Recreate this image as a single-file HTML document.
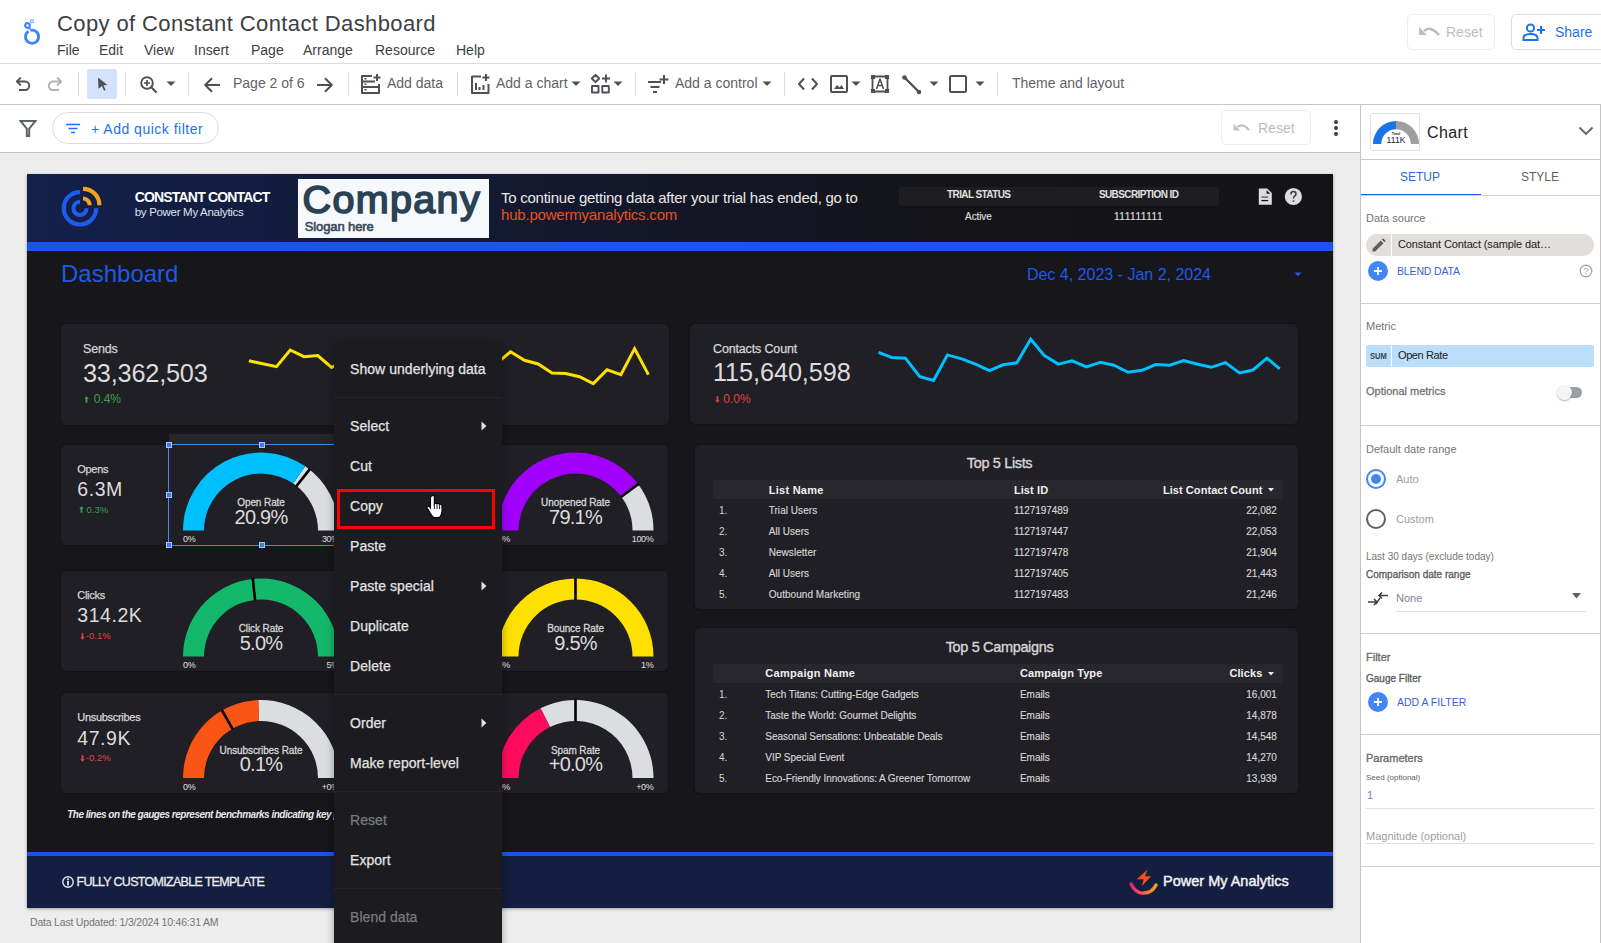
<!DOCTYPE html>
<html><head><meta charset="utf-8">
<style>
*{box-sizing:border-box;margin:0;padding:0}
html,body{width:1601px;height:943px;overflow:hidden;background:#fff;font-family:"Liberation Sans",sans-serif;position:relative}
.a{position:absolute;white-space:nowrap}
.ic{position:absolute}
/* header */
#hdr{position:absolute;left:0;top:0;width:1601px;height:64px;background:#fff;border-bottom:1px solid #dadce0}
.menu span{position:absolute;top:42px;font-size:14px;color:#3c4043;line-height:16px}
#tb{position:absolute;left:0;top:64px;width:1601px;height:41px;background:#fff;border-bottom:1px solid #c7c7c7}
.sep{position:absolute;top:8px;width:1px;height:24px;background:#dadce0}
.tbt{position:absolute;top:11px;font-size:14px;line-height:16px;color:#5f6368}
#fb{position:absolute;left:0;top:105px;width:1360px;height:48px;background:#fff;border-bottom:1px solid #c7c7c7}
#canvas{position:absolute;left:0;top:153px;width:1360px;height:790px;background:#ededed}
#panel{position:absolute;left:1360px;top:105px;width:241px;height:838px;background:#fff;border-left:1px solid #c4c4c4;border-right:1px solid #c4c4c4}
.pl{position:absolute;left:0;width:239px;height:1px;background:#d0d0d0}
.lbl{position:absolute;left:5px;font-size:11px;color:#757575;line-height:13px}
/* dashboard */
#dash{position:absolute;left:27px;top:174px;width:1306px;height:734px;background:#16161b;box-shadow:0 1px 3px rgba(0,0,0,.35);overflow:hidden}
.card{position:absolute;background:#1f1f25;border-radius:5px;box-shadow:0 0 2px rgba(0,0,0,.55)}
.w{color:#e6e6e6}
.mi{position:absolute;left:16px;height:40px;line-height:40px;font-size:14px;color:#e3e3e3;white-space:nowrap;letter-spacing:0.05px;-webkit-text-stroke:0.25px currentColor}
.dv{position:absolute;left:0;width:168px;height:1px;background:#26262b}
</style></head><body>

<!-- HEADER -->
<div id="hdr">
  <svg class="ic" style="left:15px;top:12px" width="35" height="38" viewBox="15 12 35 38">
    <path d="M30.36 30.42 A6.55 6.55 0 1 1 28.58 31.2" fill="none" stroke="#4285f4" stroke-width="2.8"/>
    <path d="M28.68 27.44 A2.35 2.35 0 1 1 29.85 25.4 L29.3 29.3" fill="none" stroke="#4285f4" stroke-width="2.2"/>
    <circle cx="32" cy="21.25" r="1.5" fill="none" stroke="#8ab4f8" stroke-width="1.3"/>
  </svg>
  <div class="a" style="left:57px;top:11px;font-size:22px;color:#3c4043;line-height:26px;letter-spacing:0.39px">Copy of Constant Contact Dashboard</div>
  <div class="menu">
    <span style="left:57px">File</span><span style="left:99px">Edit</span><span style="left:144px">View</span><span style="left:194px">Insert</span><span style="left:251px">Page</span><span style="left:303px">Arrange</span><span style="left:375px">Resource</span><span style="left:456px">Help</span>
  </div>
  <div class="a" style="left:1407px;top:14px;width:88px;height:36px;border:1px solid #ececec;border-radius:5px"></div>
  <svg class="ic" style="left:1419px;top:23px" width="22" height="18" viewBox="0 0 22 18"><path d="M5 8 Q11 2 20 12" fill="none" stroke="#bdbdbd" stroke-width="2.6"/><path d="M0 4 L0 12 L8 12 Z" fill="#bdbdbd"/></svg>
  <div class="a" style="left:1446px;top:24px;font-size:14px;line-height:16px;color:#bdbdbd">Reset</div>
  <div class="a" style="left:1511px;top:14px;width:110px;height:36px;border:1px solid #dadce0;border-radius:5px"></div>
  <svg class="ic" style="left:1522px;top:23px" width="24" height="18" viewBox="0 0 24 18"><circle cx="8.5" cy="5" r="3.6" fill="none" stroke="#1a73e8" stroke-width="2"/><path d="M1.5 17 V15 Q1.5 11 8.5 11 Q15.5 11 15.5 15 V17 Z" fill="none" stroke="#1a73e8" stroke-width="2"/><path d="M19 3 V11 M15 7 H23" stroke="#1a73e8" stroke-width="2"/></svg>
  <div class="a" style="left:1555px;top:24px;font-size:14px;line-height:16px;color:#1a73e8">Share</div>
</div>

<!-- TOOLBAR -->
<div id="tb">
  <!-- undo -->
  <svg class="ic" stroke-linejoin="round" style="left:14px;top:11px" width="18" height="18" viewBox="0 0 18 18"><path d="M3 6.5 H11 A4.2 4.2 0 0 1 11 15 H5" fill="none" stroke="#4d5054" stroke-width="1.9"/><path d="M6.8 2.6 L2.9 6.5 L6.8 10.4" fill="none" stroke="#4d5054" stroke-width="1.9"/></svg>
  <svg class="ic" stroke-linejoin="round" style="left:46px;top:11px" width="18" height="18" viewBox="0 0 18 18"><path d="M15 6.5 H7 A4.2 4.2 0 0 0 7 15 H13" fill="none" stroke="#b0b0b0" stroke-width="1.9"/><path d="M11.2 2.6 L15.1 6.5 L11.2 10.4" fill="none" stroke="#b0b0b0" stroke-width="1.9"/></svg>
  <div class="sep" style="left:78px"></div>
  <div class="a" style="left:87px;top:5px;width:30px;height:30px;background:#d3e3fd;border-radius:3px"></div>
  <svg class="ic" stroke-linejoin="round" style="left:96px;top:12px" width="14" height="16" viewBox="0 0 14 16"><path d="M2 1.5 L11.5 9 L7.4 9.3 L9.6 14 L8.1 14.7 L5.9 10.1 L2.5 12.7 Z" fill="#4d5054"/></svg>
  <div class="sep" style="left:125px"></div>
  <svg class="ic" stroke-linejoin="round" style="left:139px;top:11px" width="20" height="20" viewBox="0 0 20 20"><circle cx="8" cy="8" r="5.8" fill="none" stroke="#4d5054" stroke-width="1.9"/><path d="M12.3 12.3 L17.5 17.5" stroke="#4d5054" stroke-width="2.2"/><path d="M8 5 V11 M5 8 H11" stroke="#4d5054" stroke-width="1.7"/></svg>
  <svg class="ic" stroke-linejoin="round" style="left:166px;top:17px" width="10" height="6" viewBox="0 0 10 6"><path d="M0.5 0.5 H9.5 L5 5 Z" fill="#4d5054"/></svg>
  <div class="sep" style="left:188px"></div>
  <svg class="ic" stroke-linejoin="round" style="left:202px;top:11px" width="20" height="20" viewBox="0 0 20 20"><path d="M18 10 H3.5 M10 3.2 L3.2 10 L10 16.8" fill="none" stroke="#4d5054" stroke-width="2"/></svg>
  <div class="tbt" style="left:233px">Page 2 of 6</div>
  <svg class="ic" stroke-linejoin="round" style="left:315px;top:11px" width="20" height="20" viewBox="0 0 20 20"><path d="M2 10 H16.5 M10 3.2 L16.8 10 L10 16.8" fill="none" stroke="#4d5054" stroke-width="2"/></svg>
  <div class="sep" style="left:348px"></div>
  <svg class="ic" stroke-linejoin="round" style="left:359px;top:9px" width="24" height="22" viewBox="0 0 24 22"><path d="M13 3 H3 V20 H20 V11" fill="none" stroke="#4d5054" stroke-width="2"/><path d="M3 8.5 H16 M3 14 H20" stroke="#4d5054" stroke-width="2"/><path d="M5.5 5.7 h2 M5.5 11.2 h2 M5.5 16.8 h2" stroke="#4d5054" stroke-width="1.4"/><path d="M18 1 V8 M14.5 4.5 H21.5" stroke="#4d5054" stroke-width="2"/></svg>
  <div class="tbt" style="left:387px">Add data</div>
  <div class="sep" style="left:457px"></div>
  <svg class="ic" stroke-linejoin="round" style="left:469px;top:9px" width="24" height="22" viewBox="0 0 24 22"><path d="M12 3.5 H3 V20 H19.5 V11" fill="none" stroke="#4d5054" stroke-width="2"/><path d="M7 17 V10 M10.5 17 V14 M14.5 17 V12" stroke="#4d5054" stroke-width="2"/><path d="M17 1 V8 M13.5 4.5 H20.5" stroke="#4d5054" stroke-width="2"/></svg>
  <div class="tbt" style="left:496px">Add a chart</div>
  <svg class="ic" stroke-linejoin="round" style="left:571px;top:17px" width="10" height="6" viewBox="0 0 10 6"><path d="M0.5 0.5 H9.5 L5 5 Z" fill="#4d5054"/></svg>
  <svg class="ic" stroke-linejoin="round" style="left:590px;top:9px" width="22" height="22" viewBox="0 0 22 22"><path d="M5.5 1.8 L9.2 5.5 L5.5 9.2 L1.8 5.5 Z" fill="none" stroke="#4d5054" stroke-width="1.9"/><path d="M16 1.5 V9.5 M12 5.5 H20" stroke="#4d5054" stroke-width="1.9"/><rect x="2" y="13" width="6.5" height="6.5" fill="none" stroke="#4d5054" stroke-width="1.9"/><rect x="12.3" y="13" width="6.5" height="6.5" fill="none" stroke="#4d5054" stroke-width="1.9"/></svg>
  <svg class="ic" stroke-linejoin="round" style="left:613px;top:17px" width="10" height="6" viewBox="0 0 10 6"><path d="M0.5 0.5 H9.5 L5 5 Z" fill="#4d5054"/></svg>
  <div class="sep" style="left:635px"></div>
  <svg class="ic" stroke-linejoin="round" style="left:647px;top:9px" width="22" height="22" viewBox="0 0 22 22"><path d="M1 9 H14 M3.5 14 H12.5 M6 19 H10" stroke="#4d5054" stroke-width="2"/><path d="M17 2 V11 M12.5 6.5 H21.5" stroke="#4d5054" stroke-width="2"/></svg>
  <div class="tbt" style="left:675px">Add a control</div>
  <svg class="ic" stroke-linejoin="round" style="left:762px;top:17px" width="10" height="6" viewBox="0 0 10 6"><path d="M0.5 0.5 H9.5 L5 5 Z" fill="#4d5054"/></svg>
  <div class="sep" style="left:784px"></div>
  <svg class="ic" stroke-linejoin="round" style="left:797px;top:10px" width="22" height="20" viewBox="0 0 22 20"><path d="M7 4.5 L2 10 L7 15.5 M15 4.5 L20 10 L15 15.5" fill="none" stroke="#4d5054" stroke-width="2"/></svg>
  <svg class="ic" stroke-linejoin="round" style="left:829px;top:10px" width="20" height="20" viewBox="0 0 20 20"><rect x="2" y="2" width="16" height="16" rx="1" fill="none" stroke="#4d5054" stroke-width="2"/><path d="M5 15 L8 11 L10.5 13.5 L12.5 11 L15 15 Z" fill="#4d5054"/></svg>
  <svg class="ic" stroke-linejoin="round" style="left:851px;top:17px" width="10" height="6" viewBox="0 0 10 6"><path d="M0.5 0.5 H9.5 L5 5 Z" fill="#4d5054"/></svg>
  <svg class="ic" stroke-linejoin="round" style="left:870px;top:10px" width="20" height="20" viewBox="0 0 20 20"><rect x="2.5" y="2.5" width="15" height="15" fill="none" stroke="#4d5054" stroke-width="1.8"/><rect x="1" y="1" width="4" height="4" fill="#4d5054"/><rect x="15" y="1" width="4" height="4" fill="#4d5054"/><rect x="1" y="15" width="4" height="4" fill="#4d5054"/><rect x="15" y="15" width="4" height="4" fill="#4d5054"/><path d="M6.5 15 L10 5 L13.5 15 M7.8 11.5 H12.2" fill="none" stroke="#4d5054" stroke-width="1.5"/></svg>
  <svg class="ic" stroke-linejoin="round" style="left:901px;top:10px" width="22" height="22" viewBox="0 0 22 22"><path d="M3.5 3.5 L18 18" stroke="#4d5054" stroke-width="2.4"/><circle cx="3.5" cy="3.5" r="2.3" fill="#4d5054"/><circle cx="18" cy="18" r="2.3" fill="#4d5054"/></svg>
  <svg class="ic" stroke-linejoin="round" style="left:929px;top:17px" width="10" height="6" viewBox="0 0 10 6"><path d="M0.5 0.5 H9.5 L5 5 Z" fill="#4d5054"/></svg>
  <svg class="ic" stroke-linejoin="round" style="left:948px;top:10px" width="20" height="20" viewBox="0 0 20 20"><rect x="2" y="2" width="16" height="16" rx="1.5" fill="none" stroke="#4d5054" stroke-width="2"/></svg>
  <svg class="ic" stroke-linejoin="round" style="left:975px;top:17px" width="10" height="6" viewBox="0 0 10 6"><path d="M0.5 0.5 H9.5 L5 5 Z" fill="#4d5054"/></svg>
  <div class="sep" style="left:997px"></div>
  <div class="tbt" style="left:1012px">Theme and layout</div>
</div>

<!-- FILTER BAR -->
<div id="fb">
  <svg class="ic" style="left:19px;top:14px" width="18" height="18" viewBox="0 0 18 18"><path d="M1.5 2 H16.5 L10.2 9.5 V17 H7.8 V9.5 Z" fill="none" stroke="#5f6368" stroke-width="2" stroke-linejoin="miter"/></svg>
  <div class="a" style="left:52px;top:7px;width:167px;height:32px;border:1px solid #dadce0;border-radius:16px"></div>
  <svg class="ic" style="left:65px;top:18px" width="16" height="11" viewBox="0 0 16 11"><path d="M1 1.5 H15 M3.5 5.5 H12.5 M6 9.5 H10" stroke="#1a73e8" stroke-width="1.6"/></svg>
  <div class="a" style="left:91px;top:16px;font-size:14px;line-height:16px;color:#1a73e8;letter-spacing:0.5px">+ Add quick filter</div>
  <div class="a" style="left:1221px;top:5px;width:90px;height:35px;border:1px solid #ececec;border-radius:5px"></div>
  <svg class="ic" style="left:1233px;top:16px" width="18" height="14" viewBox="0 0 18 14"><path d="M4.5 6 Q10 1.5 16 9" fill="none" stroke="#bdbdbd" stroke-width="2.2"/><path d="M0.5 2.8 L0.5 9.5 L7 9.5 Z" fill="#bdbdbd"/></svg>
  <div class="a" style="left:1258px;top:15px;font-size:14px;line-height:16px;color:#bdbdbd">Reset</div>
  <div class="a" style="left:1334px;top:15px;width:4px;height:4px;border-radius:50%;background:#3c4043"></div>
  <div class="a" style="left:1334px;top:21px;width:4px;height:4px;border-radius:50%;background:#3c4043"></div>
  <div class="a" style="left:1334px;top:27px;width:4px;height:4px;border-radius:50%;background:#3c4043"></div>
</div>

<div id="canvas"></div>

<!-- PANEL -->
<div id="panel">
  <div class="a" style="left:9px;top:8px;width:50px;height:38px;border:1px solid #e3e3e3;border-radius:2px;background:#fff"></div>
  <svg class="ic" style="left:11px;top:15px" width="48" height="26" viewBox="0 0 48 26">
    <path d="M1 24 A23 23 0 0 1 24 1 V9.3 A14.7 14.7 0 0 0 9.3 24 Z" fill="#1a73e8"/>
    <path d="M24 1 A23 23 0 0 1 47 24 H38.7 A14.7 14.7 0 0 0 24 9.3 Z" fill="#9e9e9e"/>
    <text x="24" y="22.8" font-size="8.6" text-anchor="middle" fill="#202124" font-family="Liberation Sans">111K</text>
    <text x="24" y="14.6" font-size="3.6" text-anchor="middle" fill="#202124" font-family="Liberation Sans" font-weight="bold">Total</text>
  </svg>
  <div class="a" style="left:66px;top:19px;font-size:16px;line-height:18px;color:#202124;letter-spacing:0.4px">Chart</div>
  <svg class="ic" style="left:217px;top:21px" width="16" height="10" viewBox="0 0 16 10"><path d="M1.5 1.5 L8 8 L14.5 1.5" fill="none" stroke="#5f6368" stroke-width="1.8"/></svg>
  <div class="pl" style="top:54px;background:#c8c8c8"></div>
  <div class="a" style="left:39px;top:65px;font-size:12px;line-height:14px;color:#3367d6">SETUP</div>
  <div class="a" style="left:160px;top:65px;font-size:12px;line-height:14px;color:#616161">STYLE</div>
  <div class="a" style="left:0;top:89px;width:120px;height:2px;background:#1a57e0"></div>
  <div class="pl" style="top:90px;background:#d6d6d6"></div>
  <div class="lbl" style="left:5px;top:107px">Data source</div>
  <div class="a" style="left:5px;top:129px;width:228px;height:22px;border-radius:11px;background:#e2dedb"></div>
  <div class="a" style="left:30px;top:129px;width:1px;height:22px;background:#fff"></div>
  <svg class="ic" style="left:10px;top:133px" width="15" height="15" viewBox="0 0 15 15"><path d="M1.5 13.5 L1.5 10.8 L9.8 2.5 L12.5 5.2 L4.2 13.5 Z" fill="#5f5f5f"/><path d="M10.8 1.5 L12 0.3 L14.7 3 L13.5 4.2 Z" fill="#5f5f5f"/></svg>
  <div class="a" style="left:37px;top:133px;font-size:11px;line-height:13px;color:#212121;letter-spacing:-0.13px">Constant Contact (sample dat…</div>
  <div class="a" style="left:7px;top:156px;width:20px;height:20px;border-radius:50%;background:#4285f4"></div>
  <svg class="ic" style="left:12px;top:161px" width="10" height="10" viewBox="0 0 10 10"><path d="M5 1 V9 M1 5 H9" stroke="#fff" stroke-width="1.8"/></svg>
  <div class="a" style="left:36px;top:160px;font-size:10.5px;line-height:13px;color:#3c5ed6;letter-spacing:-0.15px">BLEND DATA</div>
  <svg class="ic" style="left:218px;top:159px" width="14" height="14" viewBox="0 0 14 14"><circle cx="7" cy="7" r="5.8" fill="none" stroke="#9e9e9e" stroke-width="1.2"/><text x="7" y="10.2" font-size="9" text-anchor="middle" fill="#9e9e9e" font-family="Liberation Sans">?</text></svg>
  <div class="pl" style="top:198px"></div>
  <div class="lbl" style="left:5px;top:215px">Metric</div>
  <div class="a" style="left:5px;top:240px;width:228px;height:22px;border-radius:2px;background:#bbdefb"></div>
  <div class="a" style="left:30px;top:240px;width:1px;height:22px;background:#fff"></div>
  <div class="a" style="left:9px;top:245px;font-size:9.5px;line-height:11px;color:#37474f;font-weight:bold;transform:scaleX(0.8);transform-origin:left">SUM</div>
  <div class="a" style="left:37px;top:244px;font-size:11px;line-height:13px;color:#212121;letter-spacing:-0.4px">Open Rate</div>
  <div class="lbl" style="left:5px;top:280px;color:#757575;-webkit-text-stroke:0.3px #757575">Optional metrics</div>
  <div class="a" style="left:197px;top:282px;width:24px;height:11px;border-radius:6px;background:#9aa0a6"></div>
  <div class="a" style="left:196px;top:280px;width:15px;height:15px;border-radius:50%;background:#f5f5f5;box-shadow:0 1px 2px rgba(0,0,0,.3)"></div>
  <div class="pl" style="top:320px"></div>
  <div class="lbl" style="left:5px;top:338px">Default date range</div>
  <div class="a" style="left:5px;top:364px;width:20px;height:20px;border-radius:50%;border:2px solid #4285f4"></div>
  <div class="a" style="left:10px;top:369px;width:10px;height:10px;border-radius:50%;background:#4285f4"></div>
  <div class="a" style="left:35px;top:368px;font-size:11px;line-height:13px;color:#9e9e9e">Auto</div>
  <div class="a" style="left:5px;top:404px;width:20px;height:20px;border-radius:50%;border:2px solid #616161"></div>
  <div class="a" style="left:35px;top:408px;font-size:11px;line-height:13px;color:#9e9e9e">Custom</div>
  <div class="a" style="left:5px;top:446px;font-size:10px;line-height:12px;color:#757575">Last 30 days (exclude today)</div>
  <div class="a" style="left:5px;top:464px;font-size:10px;line-height:12px;color:#5f5f5f;-webkit-text-stroke:0.35px #5f5f5f">Comparison date range</div>
  <svg class="ic" style="left:6px;top:486px" width="22" height="16" viewBox="0 0 22 16"><path d="M12 4.5 H21 M15 1.5 L12 4.5 L15 7.5" fill="none" stroke="#424242" stroke-width="1.6"/><path d="M1 11 H10 M7 8 L10 11 L7 14" fill="none" stroke="#424242" stroke-width="1.6"/><path d="M9 13 L13 7" stroke="#424242" stroke-width="1.4"/></svg>
  <div class="a" style="left:35px;top:487px;font-size:11px;line-height:13px;color:#8c7b9a">None</div>
  <svg class="ic" style="left:211px;top:488px" width="9" height="6" viewBox="0 0 9 6"><path d="M0 0 H9 L4.5 5.5 Z" fill="#616161"/></svg>
  <div class="a" style="left:35px;top:506px;width:190px;height:1px;background:#e0e0e0"></div>
  <div class="pl" style="top:528px"></div>
  <div class="lbl" style="left:5px;top:546px;color:#6b6b6b;-webkit-text-stroke:0.35px #6b6b6b">Filter</div>
  <div class="a" style="left:5px;top:568px;font-size:10px;line-height:12px;color:#5f5f5f;-webkit-text-stroke:0.35px #5f5f5f">Gauge Filter</div>
  <div class="a" style="left:7px;top:587px;width:20px;height:20px;border-radius:50%;background:#4285f4"></div>
  <svg class="ic" style="left:12px;top:592px" width="10" height="10" viewBox="0 0 10 10"><path d="M5 1 V9 M1 5 H9" stroke="#fff" stroke-width="1.8"/></svg>
  <div class="a" style="left:36px;top:591px;font-size:10.5px;line-height:13px;color:#3c5ed6">ADD A FILTER</div>
  <div class="pl" style="top:629px"></div>
  <div class="lbl" style="left:5px;top:647px;color:#6b6b6b;-webkit-text-stroke:0.35px #6b6b6b">Parameters</div>
  <div class="a" style="left:5px;top:668px;font-size:8px;line-height:10px;color:#616161">Seed (optional)</div>
  <div class="a" style="left:6px;top:684px;font-size:11px;line-height:13px;color:#9c6fb8">1</div>
  <div class="a" style="left:5px;top:703px;width:228px;height:1px;background:#e0e0e0"></div>
  <div class="a" style="left:5px;top:725px;font-size:11px;line-height:13px;color:#9e9e9e">Magnitude (optional)</div>
  <div class="a" style="left:5px;top:738px;width:228px;height:1px;background:#e0e0e0"></div>
  <div class="pl" style="top:761px"></div>
</div>

<!-- DASHBOARD -->
<div id="dash">
<div class="a" style="left:0;top:0;width:1306px;height:68px;background:linear-gradient(90deg,#13204a 0%,#131c3c 22%,#14172a 45%,#141419 70%,#141418 100%)"></div>
<div class="a" style="left:0;top:68px;width:1306px;height:9px;background:#1a55ea"></div>
<div class="a" style="left:0;top:678px;width:1306px;height:4px;background:#1a55ea"></div>
<div class="a" style="left:0;top:682px;width:1306px;height:52px;background:#131e41"></div>
<svg class="ic" style="left:0;top:0" width="120" height="68" viewBox="0 0 120 68">
<path d="M69.2 34.3 A16.2 16.2 0 1 1 53 18.1" fill="none" stroke="#1e5cf0" stroke-width="4.2"/>
<path d="M59.6 34.3 A6.6 6.6 0 1 1 53 27.7" fill="none" stroke="#1e5cf0" stroke-width="4"/>
<path d="M56 14.8 A16.4 16.4 0 0 1 72.4 31.2" fill="none" stroke="#f5a31a" stroke-width="4.2"/>
<path d="M56 24.5 A6.7 6.7 0 0 1 62.7 31.2" fill="none" stroke="#f5a31a" stroke-width="4"/>
</svg>
<div class="a" style="left:107.7px;top:16.2px;font-size:14px;line-height:14px;color:#ffffff;font-weight:bold;letter-spacing:-0.82px">CONSTANT CONTACT</div>
<div class="a" style="left:107.7px;top:32.5px;font-size:11.5px;line-height:11.5px;color:#dfe3ee;font-weight:normal;letter-spacing:-0.3px">by Power My Analytics</div>
<div class="a" style="left:271px;top:5px;width:191px;height:59px;background:#f7f8fb"></div>
<div class="a" style="left:275.5px;top:5.8px;font-size:39.5px;line-height:39.5px;color:#2b4254;font-weight:normal;letter-spacing:1.35px;-webkit-text-stroke:1.7px #2b4254">Company</div>
<div class="a" style="left:277.7px;top:45.6px;font-size:13px;line-height:13px;color:#3a4b57;font-weight:normal;letter-spacing:-0.1px;-webkit-text-stroke:0.6px #3a4b57">Slogan here</div>
<div class="a" style="left:474.0px;top:15.6px;font-size:15px;line-height:15px;color:#e8e8e8;font-weight:normal;letter-spacing:-0.25px">To continue getting data after your trial has ended, go to</div>
<div class="a" style="left:474.0px;top:32.9px;font-size:15px;line-height:15px;color:#e6531d;font-weight:normal;letter-spacing:-0.2px">hub.powermyanalytics.com</div>
<div class="a" style="left:872px;top:12.5px;width:320px;height:19.5px;background:#1d1d22;border-radius:3px"></div>
<div class="a" style="left:951.7px;transform:translateX(-50%);top:15.5px;font-size:10px;line-height:10px;color:#e0e0e0;font-weight:bold;letter-spacing:-0.6px">TRIAL STATUS</div>
<div class="a" style="left:1111.6px;transform:translateX(-50%);top:15.5px;font-size:10px;line-height:10px;color:#e0e0e0;font-weight:bold;letter-spacing:-0.6px">SUBSCRIPTION ID</div>
<div class="a" style="left:951.4px;transform:translateX(-50%);top:37.9px;font-size:10px;line-height:10px;color:#d8d8d8;font-weight:normal;letter-spacing:-0.1px;-webkit-text-stroke:0.2px #d8d8d8">Active</div>
<div class="a" style="left:1111.5px;transform:translateX(-50%);top:37.9px;font-size:10px;line-height:10px;color:#d8d8d8;font-weight:normal;letter-spacing:0.55px;-webkit-text-stroke:0.2px #d8d8d8">111111111</div>
<svg class="ic" style="left:1231px;top:14px" width="15" height="18" viewBox="0 0 15 18">
<path d="M0.8 0.5 H9.2 L13.8 5.1 V16.8 H0.8 Z" fill="#dcdde0"/><path d="M8.6 2 L12.3 5.7 H8.6 Z" fill="#141418"/>
<path d="M3.4 9.1 H10.2" stroke="#55565a" stroke-width="1.3"/><path d="M3.4 12.6 H10.2" stroke="#141418" stroke-width="1.3"/></svg>
<svg class="ic" style="left:1256.5px;top:13px" width="19" height="19" viewBox="0 0 19 19">
<circle cx="9.4" cy="9.5" r="8.6" fill="#dcdde0"/>
<path d="M6.9 7.4 Q6.9 4.6 9.4 4.6 Q12 4.6 12 7 Q12 8.3 10.6 9.2 Q9.5 9.9 9.5 11.6" fill="none" stroke="#3a3a3e" stroke-width="1.5"/>
<rect x="8.7" y="13.4" width="1.6" height="1.4" fill="#3a3a3e"/></svg>
<div class="a" style="left:34.0px;top:87.9px;font-size:24px;line-height:24px;color:#1f5ae6;font-weight:normal;">Dashboard</div>
<div class="a" style="left:999.9px;top:92.8px;font-size:16px;line-height:16px;color:#1f5ae6;font-weight:normal;">Dec 4, 2023 - Jan 2, 2024</div>
<svg class="ic" style="left:1266.5px;top:98px" width="8" height="5" viewBox="0 0 8 5"><path d="M0.5 0.5 H7.5 L4 4.2 Z" fill="#1f5ae6"/></svg>
<div class="card" style="left:34px;top:150px;width:608px;height:100.5px"></div>
<div class="card" style="left:663.3px;top:150px;width:607.5px;height:99.5px"></div>
<div class="card" style="left:34px;top:271px;width:607px;height:100px"></div>
<div class="card" style="left:34px;top:397px;width:607px;height:100px"></div>
<div class="card" style="left:34px;top:518.5px;width:607px;height:100px"></div>
<div class="card" style="left:668px;top:271px;width:603px;height:164px"></div>
<div class="card" style="left:668px;top:454px;width:603px;height:165px"></div>
<div class="a" style="left:141.5px;top:260px;width:170px;height:10px;background:#25252b"></div>
<svg class="ic" style="left:0;top:0" width="1306" height="734" viewBox="0 0 1306 734">
<path d="M278.18 292.32A78 78 0 0 1 312.00 356.60L291.00 356.60A57 57 0 0 0 266.29 309.62Z" fill="#dcdde0"/>
<path d="M156.00 356.60A78 78 0 0 1 278.18 292.32L266.29 309.62A57 57 0 0 0 177.00 356.60Z" fill="#00bfff"/>
<line x1="269.17" y1="312.38" x2="282.87" y2="295.17" stroke="#000" stroke-width="2.6"/>
<path d="M610.30 309.01A78 78 0 0 1 626.50 356.60L605.50 356.60A57 57 0 0 0 593.66 321.82Z" fill="#dcdde0"/>
<path d="M470.50 356.60A78 78 0 0 1 610.30 309.01L593.66 321.82A57 57 0 0 0 491.50 356.60Z" fill="#a100ff"/>
<line x1="593.92" y1="322.99" x2="611.60" y2="309.91" stroke="#000" stroke-width="2.6"/>
<path d="M156.00 482.50A78 78 0 0 1 312.00 482.50L291.00 482.50A57 57 0 0 0 177.00 482.50Z" fill="#13b86b"/>
<line x1="228.09" y1="426.31" x2="225.79" y2="404.43" stroke="#000" stroke-width="2.6"/>
<path d="M470.50 482.50A78 78 0 0 1 626.50 482.50L605.50 482.50A57 57 0 0 0 491.50 482.50Z" fill="#ffe100"/>
<line x1="548.50" y1="426.00" x2="548.50" y2="404.00" stroke="#000" stroke-width="2.6"/>
<path d="M231.28 526.05A78 78 0 0 1 312.00 604.00L291.00 604.00A57 57 0 0 0 232.01 547.03Z" fill="#dcdde0"/>
<path d="M156.00 604.00A78 78 0 0 1 231.28 526.05L232.01 547.03A57 57 0 0 0 177.00 604.00Z" fill="#fa5514"/>
<line x1="205.75" y1="555.07" x2="194.75" y2="536.02" stroke="#000" stroke-width="2.6"/>
<path d="M513.57 534.26A78 78 0 0 1 626.50 604.00L605.50 604.00A57 57 0 0 0 522.98 553.03Z" fill="#dcdde0"/>
<path d="M470.50 604.00A78 78 0 0 1 513.57 534.26L522.98 553.03A57 57 0 0 0 491.50 604.00Z" fill="#ff0a5c"/>
<line x1="548.50" y1="547.50" x2="548.50" y2="525.50" stroke="#000" stroke-width="2.6"/>
<polyline points="221.9,186.8 235.7,189.8 249.5,192.7 263.2,176.0 277.0,182.7 290.8,181.6 304.6,193.5 318.3,186.0 332.1,178.0 345.9,169.0 359.7,183.0 373.4,188.0 387.2,191.0 401.0,186.0 414.8,194.0 428.5,198.0 442.3,192.0 456.1,187.0 469.9,189.2 483.6,177.8 497.4,186.3 511.2,190.0 525.0,199.0 538.7,199.5 552.5,202.7 566.3,209.6 580.1,195.8 593.9,200.6 607.6,174.6 621.4,200.6" fill="none" stroke="#ffe100" stroke-width="3" stroke-linejoin="miter" stroke-miterlimit="3"/>
<polyline points="851.5,178.3 864.6,183.5 878.4,184.2 892.8,202.6 906.6,206.5 920.4,180.9 934.8,184.9 948.6,190.1 962.4,196.7 976.1,190.8 989.9,188.8 1003.7,165.2 1017.4,181.6 1031.2,190.1 1045.0,186.8 1059.4,192.9 1073.5,188.2 1086.9,191.2 1101.0,198.3 1115.1,196.3 1128.6,190.6 1142.7,191.2 1156.8,186.6 1170.9,190.2 1184.3,193.3 1198.4,188.6 1212.5,199.0 1225.9,196.0 1240.0,184.2 1252.8,194.9" fill="none" stroke="#00bfff" stroke-width="3" stroke-linejoin="miter" stroke-miterlimit="3"/>

</svg>
<div class="a" style="left:56.0px;top:168.7px;font-size:12.5px;line-height:12.5px;color:#d6d6d6;font-weight:normal;letter-spacing:-0.2px;-webkit-text-stroke:0.25px #d6d6d6">Sends</div>
<div class="a" style="left:56.0px;top:187.0px;font-size:25.3px;line-height:25.3px;color:#dcdcdc;font-weight:normal;letter-spacing:-0.2px">33,362,503</div>
<svg class="ic" style="left:57.0px;top:222.3px" width="5" height="7" viewBox="0 0 5 7"><path d="M2.5 0.3 L4.8 2.8 H3.4 V6.7 H1.6 V2.8 H0.2 Z" fill="#3aa14a"/></svg>
<div class="a" style="left:66.7px;top:218.6px;font-size:12px;line-height:12px;color:#3aa14a;font-weight:normal;">0.4%</div>
<div class="a" style="left:686.0px;top:168.5px;font-size:12.5px;line-height:12.5px;color:#d6d6d6;font-weight:normal;letter-spacing:-0.15px;-webkit-text-stroke:0.25px #d6d6d6">Contacts Count</div>
<div class="a" style="left:686.0px;top:186.3px;font-size:25.3px;line-height:25.3px;color:#dcdcdc;font-weight:normal;letter-spacing:-0.1px">115,640,598</div>
<svg class="ic" style="left:687.5px;top:222.2px" width="5" height="7" viewBox="0 0 5 7"><path d="M2.5 6.7 L4.8 4.2 H3.4 V0.3 H1.6 V4.2 H0.2 Z" fill="#e0443c"/></svg>
<div class="a" style="left:696.3px;top:218.5px;font-size:12px;line-height:12px;color:#e0443c;font-weight:normal;">0.0%</div>
<div class="a" style="left:50.3px;top:289.7px;font-size:11px;line-height:11px;color:#d6d6d6;font-weight:normal;letter-spacing:-0.3px;-webkit-text-stroke:0.25px #d6d6d6">Opens</div>
<div class="a" style="left:50.3px;top:305.8px;font-size:19.5px;line-height:19.5px;color:#dcdcdc;font-weight:normal;letter-spacing:0.55px">6.3M</div>
<svg class="ic" style="left:51.5px;top:332.3px" width="5" height="7" viewBox="0 0 5 7"><path d="M2.5 0.3 L4.8 2.8 H3.4 V6.7 H1.6 V2.8 H0.2 Z" fill="#3aa14a"/></svg>
<div class="a" style="left:59.6px;top:330.7px;font-size:9.5px;line-height:9.5px;color:#3aa14a;font-weight:normal;letter-spacing:0px">0.3%</div>
<div class="a" style="left:50.3px;top:416.1px;font-size:11px;line-height:11px;color:#d6d6d6;font-weight:normal;letter-spacing:-0.3px;-webkit-text-stroke:0.25px #d6d6d6">Clicks</div>
<div class="a" style="left:50.3px;top:432.2px;font-size:19.5px;line-height:19.5px;color:#dcdcdc;font-weight:normal;letter-spacing:0.55px">314.2K</div>
<svg class="ic" style="left:52.5px;top:458.7px" width="5" height="7" viewBox="0 0 5 7"><path d="M2.5 6.7 L4.8 4.2 H3.4 V0.3 H1.6 V4.2 H0.2 Z" fill="#e0443c"/></svg>
<div class="a" style="left:58.8px;top:457.1px;font-size:9.5px;line-height:9.5px;color:#e0443c;font-weight:normal;letter-spacing:0px">-0.1%</div>
<div class="a" style="left:50.3px;top:538.4px;font-size:11px;line-height:11px;color:#d6d6d6;font-weight:normal;letter-spacing:-0.3px;-webkit-text-stroke:0.25px #d6d6d6">Unsubscribes</div>
<div class="a" style="left:50.3px;top:554.5px;font-size:19.5px;line-height:19.5px;color:#dcdcdc;font-weight:normal;letter-spacing:0.55px">47.9K</div>
<svg class="ic" style="left:52.5px;top:581.0px" width="5" height="7" viewBox="0 0 5 7"><path d="M2.5 6.7 L4.8 4.2 H3.4 V0.3 H1.6 V4.2 H0.2 Z" fill="#e0443c"/></svg>
<div class="a" style="left:58.8px;top:579.4px;font-size:9.5px;line-height:9.5px;color:#e0443c;font-weight:normal;letter-spacing:0px">-0.2%</div>
<div class="a" style="left:234.0px;transform:translateX(-50%);top:324.3px;font-size:10px;line-height:10px;color:#d6d6d6;font-weight:normal;letter-spacing:-0.1px;-webkit-text-stroke:0.3px #d6d6d6">Open Rate</div>
<div class="a" style="left:234.0px;transform:translateX(-50%);top:333.0px;font-size:20px;line-height:20px;color:#dcdcdc;font-weight:normal;letter-spacing:-0.75px">20.9%</div>
<div class="a" style="left:156.0px;top:361.3px;font-size:9px;line-height:9px;color:#e0e0e0;font-weight:normal;letter-spacing:-0.3px">0%</div>
<div class="a" style="right:994.0px;top:361.3px;font-size:9px;line-height:9px;color:#e0e0e0;font-weight:normal;letter-spacing:-0.3px">30%</div>
<div class="a" style="left:548.5px;transform:translateX(-50%);top:324.3px;font-size:10px;line-height:10px;color:#d6d6d6;font-weight:normal;letter-spacing:-0.1px;-webkit-text-stroke:0.3px #d6d6d6">Unopened Rate</div>
<div class="a" style="left:548.5px;transform:translateX(-50%);top:333.0px;font-size:20px;line-height:20px;color:#dcdcdc;font-weight:normal;letter-spacing:-0.75px">79.1%</div>
<div class="a" style="left:470.5px;top:361.3px;font-size:9px;line-height:9px;color:#e0e0e0;font-weight:normal;letter-spacing:-0.3px">0%</div>
<div class="a" style="right:679.5px;top:361.3px;font-size:9px;line-height:9px;color:#e0e0e0;font-weight:normal;letter-spacing:-0.3px">100%</div>
<div class="a" style="left:234.0px;transform:translateX(-50%);top:450.2px;font-size:10px;line-height:10px;color:#d6d6d6;font-weight:normal;letter-spacing:-0.1px;-webkit-text-stroke:0.3px #d6d6d6">Click Rate</div>
<div class="a" style="left:234.0px;transform:translateX(-50%);top:458.9px;font-size:20px;line-height:20px;color:#dcdcdc;font-weight:normal;letter-spacing:-0.75px">5.0%</div>
<div class="a" style="left:156.0px;top:487.2px;font-size:9px;line-height:9px;color:#e0e0e0;font-weight:normal;letter-spacing:-0.3px">0%</div>
<div class="a" style="right:994.0px;top:487.2px;font-size:9px;line-height:9px;color:#e0e0e0;font-weight:normal;letter-spacing:-0.3px">5%</div>
<div class="a" style="left:548.5px;transform:translateX(-50%);top:450.2px;font-size:10px;line-height:10px;color:#d6d6d6;font-weight:normal;letter-spacing:-0.1px;-webkit-text-stroke:0.3px #d6d6d6">Bounce Rate</div>
<div class="a" style="left:548.5px;transform:translateX(-50%);top:458.9px;font-size:20px;line-height:20px;color:#dcdcdc;font-weight:normal;letter-spacing:-0.75px">9.5%</div>
<div class="a" style="left:470.5px;top:487.2px;font-size:9px;line-height:9px;color:#e0e0e0;font-weight:normal;letter-spacing:-0.3px">0%</div>
<div class="a" style="right:679.5px;top:487.2px;font-size:9px;line-height:9px;color:#e0e0e0;font-weight:normal;letter-spacing:-0.3px">1%</div>
<div class="a" style="left:234.0px;transform:translateX(-50%);top:571.7px;font-size:10px;line-height:10px;color:#d6d6d6;font-weight:normal;letter-spacing:-0.1px;-webkit-text-stroke:0.3px #d6d6d6">Unsubscribes Rate</div>
<div class="a" style="left:234.0px;transform:translateX(-50%);top:580.4px;font-size:20px;line-height:20px;color:#dcdcdc;font-weight:normal;letter-spacing:-0.75px">0.1%</div>
<div class="a" style="left:156.0px;top:608.7px;font-size:9px;line-height:9px;color:#e0e0e0;font-weight:normal;letter-spacing:-0.3px">0%</div>
<div class="a" style="right:994.0px;top:608.7px;font-size:9px;line-height:9px;color:#e0e0e0;font-weight:normal;letter-spacing:-0.3px">+0%</div>
<div class="a" style="left:548.5px;transform:translateX(-50%);top:571.7px;font-size:10px;line-height:10px;color:#d6d6d6;font-weight:normal;letter-spacing:-0.1px;-webkit-text-stroke:0.3px #d6d6d6">Spam Rate</div>
<div class="a" style="left:548.5px;transform:translateX(-50%);top:580.4px;font-size:20px;line-height:20px;color:#dcdcdc;font-weight:normal;letter-spacing:-0.75px">+0.0%</div>
<div class="a" style="left:470.5px;top:608.7px;font-size:9px;line-height:9px;color:#e0e0e0;font-weight:normal;letter-spacing:-0.3px">0%</div>
<div class="a" style="right:679.5px;top:608.7px;font-size:9px;line-height:9px;color:#e0e0e0;font-weight:normal;letter-spacing:-0.3px">+0%</div>
<div class="a" style="left:40.2px;top:635.7px;font-size:10px;line-height:10px;color:#e8e8e8;font-weight:bold;letter-spacing:-0.5px;font-style:italic;width:420px;overflow:hidden">The lines on the gauges represent benchmarks indicating key performance indicators</div>
<div class="a" style="left:972.5px;transform:translateX(-50%);top:282.3px;font-size:14.5px;line-height:14.5px;color:#d6d6d6;font-weight:normal;letter-spacing:-0.35px;-webkit-text-stroke:0.35px #d6d6d6">Top 5 Lists</div>
<div class="a" style="left:686px;top:305.8px;width:570px;height:19px;background:#27272d"></div>
<div class="a" style="left:741.7px;top:310.6px;font-size:11px;line-height:11px;color:#f0f0f0;font-weight:bold;letter-spacing:0.27px">List Name</div>
<div class="a" style="left:986.9px;top:310.6px;font-size:11px;line-height:11px;color:#f0f0f0;font-weight:bold;letter-spacing:0.1px">List ID</div>
<div class="a" style="right:70.6px;top:310.6px;font-size:11px;line-height:11px;color:#f0f0f0;font-weight:bold;letter-spacing:0.06px">List Contact Count</div>
<svg class="ic" style="left:1240.7px;top:314.0px" width="6" height="4" viewBox="0 0 6 4"><path d="M0 0 H6 L3 3.5 Z" fill="#f0f0f0"/></svg>
<div class="a" style="left:692.0px;top:331.8px;font-size:10px;line-height:10px;color:#d6d6d6;font-weight:normal;letter-spacing:0px">1.</div>
<div class="a" style="left:741.7px;top:331.8px;font-size:10px;line-height:10px;color:#d6d6d6;font-weight:normal;letter-spacing:0.05px;-webkit-text-stroke:0.15px #d6d6d6">Trial Users</div>
<div class="a" style="left:986.9px;top:331.8px;font-size:10px;line-height:10px;color:#d6d6d6;font-weight:normal;letter-spacing:-0.05px;-webkit-text-stroke:0.15px #d6d6d6">1127197489</div>
<div class="a" style="right:56.1px;top:331.8px;font-size:10px;line-height:10px;color:#d6d6d6;font-weight:normal;letter-spacing:0px;-webkit-text-stroke:0.15px #d6d6d6">22,082</div>
<div class="a" style="left:692.0px;top:352.8px;font-size:10px;line-height:10px;color:#d6d6d6;font-weight:normal;letter-spacing:0px">2.</div>
<div class="a" style="left:741.7px;top:352.8px;font-size:10px;line-height:10px;color:#d6d6d6;font-weight:normal;letter-spacing:0.05px;-webkit-text-stroke:0.15px #d6d6d6">All Users</div>
<div class="a" style="left:986.9px;top:352.8px;font-size:10px;line-height:10px;color:#d6d6d6;font-weight:normal;letter-spacing:-0.05px;-webkit-text-stroke:0.15px #d6d6d6">1127197447</div>
<div class="a" style="right:56.1px;top:352.8px;font-size:10px;line-height:10px;color:#d6d6d6;font-weight:normal;letter-spacing:0px;-webkit-text-stroke:0.15px #d6d6d6">22,053</div>
<div class="a" style="left:692.0px;top:373.8px;font-size:10px;line-height:10px;color:#d6d6d6;font-weight:normal;letter-spacing:0px">3.</div>
<div class="a" style="left:741.7px;top:373.8px;font-size:10px;line-height:10px;color:#d6d6d6;font-weight:normal;letter-spacing:0.05px;-webkit-text-stroke:0.15px #d6d6d6">Newsletter</div>
<div class="a" style="left:986.9px;top:373.8px;font-size:10px;line-height:10px;color:#d6d6d6;font-weight:normal;letter-spacing:-0.05px;-webkit-text-stroke:0.15px #d6d6d6">1127197478</div>
<div class="a" style="right:56.1px;top:373.8px;font-size:10px;line-height:10px;color:#d6d6d6;font-weight:normal;letter-spacing:0px;-webkit-text-stroke:0.15px #d6d6d6">21,904</div>
<div class="a" style="left:692.0px;top:394.8px;font-size:10px;line-height:10px;color:#d6d6d6;font-weight:normal;letter-spacing:0px">4.</div>
<div class="a" style="left:741.7px;top:394.8px;font-size:10px;line-height:10px;color:#d6d6d6;font-weight:normal;letter-spacing:0.05px;-webkit-text-stroke:0.15px #d6d6d6">All Users</div>
<div class="a" style="left:986.9px;top:394.8px;font-size:10px;line-height:10px;color:#d6d6d6;font-weight:normal;letter-spacing:-0.05px;-webkit-text-stroke:0.15px #d6d6d6">1127197405</div>
<div class="a" style="right:56.1px;top:394.8px;font-size:10px;line-height:10px;color:#d6d6d6;font-weight:normal;letter-spacing:0px;-webkit-text-stroke:0.15px #d6d6d6">21,443</div>
<div class="a" style="left:692.0px;top:415.8px;font-size:10px;line-height:10px;color:#d6d6d6;font-weight:normal;letter-spacing:0px">5.</div>
<div class="a" style="left:741.7px;top:415.8px;font-size:10px;line-height:10px;color:#d6d6d6;font-weight:normal;letter-spacing:0.05px;-webkit-text-stroke:0.15px #d6d6d6">Outbound Marketing</div>
<div class="a" style="left:986.9px;top:415.8px;font-size:10px;line-height:10px;color:#d6d6d6;font-weight:normal;letter-spacing:-0.05px;-webkit-text-stroke:0.15px #d6d6d6">1127197483</div>
<div class="a" style="right:56.1px;top:415.8px;font-size:10px;line-height:10px;color:#d6d6d6;font-weight:normal;letter-spacing:0px;-webkit-text-stroke:0.15px #d6d6d6">21,246</div>
<div class="a" style="left:972.5px;transform:translateX(-50%);top:466.3px;font-size:14.5px;line-height:14.5px;color:#d6d6d6;font-weight:normal;letter-spacing:-0.35px;-webkit-text-stroke:0.35px #d6d6d6">Top 5 Campaigns</div>
<div class="a" style="left:686px;top:489.6px;width:570px;height:19px;background:#27272d"></div>
<div class="a" style="left:738.3px;top:494.4px;font-size:11px;line-height:11px;color:#f0f0f0;font-weight:bold;letter-spacing:0.28px">Campaign Name</div>
<div class="a" style="left:993.0px;top:494.4px;font-size:11px;line-height:11px;color:#f0f0f0;font-weight:bold;letter-spacing:0.1px">Campaign Type</div>
<div class="a" style="right:70.6px;top:494.4px;font-size:11px;line-height:11px;color:#f0f0f0;font-weight:bold;letter-spacing:0.1px">Clicks</div>
<svg class="ic" style="left:1240.7px;top:497.8px" width="6" height="4" viewBox="0 0 6 4"><path d="M0 0 H6 L3 3.5 Z" fill="#f0f0f0"/></svg>
<div class="a" style="left:692.0px;top:515.6px;font-size:10px;line-height:10px;color:#d6d6d6;font-weight:normal;letter-spacing:0px">1.</div>
<div class="a" style="left:738.3px;top:515.6px;font-size:10px;line-height:10px;color:#d6d6d6;font-weight:normal;letter-spacing:-0.05px;-webkit-text-stroke:0.15px #d6d6d6">Tech Titans: Cutting-Edge Gadgets</div>
<div class="a" style="left:993.0px;top:515.6px;font-size:10px;line-height:10px;color:#d6d6d6;font-weight:normal;letter-spacing:-0.05px;-webkit-text-stroke:0.15px #d6d6d6">Emails</div>
<div class="a" style="right:56.1px;top:515.6px;font-size:10px;line-height:10px;color:#d6d6d6;font-weight:normal;letter-spacing:0px;-webkit-text-stroke:0.15px #d6d6d6">16,001</div>
<div class="a" style="left:692.0px;top:536.6px;font-size:10px;line-height:10px;color:#d6d6d6;font-weight:normal;letter-spacing:0px">2.</div>
<div class="a" style="left:738.3px;top:536.6px;font-size:10px;line-height:10px;color:#d6d6d6;font-weight:normal;letter-spacing:-0.05px;-webkit-text-stroke:0.15px #d6d6d6">Taste the World: Gourmet Delights</div>
<div class="a" style="left:993.0px;top:536.6px;font-size:10px;line-height:10px;color:#d6d6d6;font-weight:normal;letter-spacing:-0.05px;-webkit-text-stroke:0.15px #d6d6d6">Emails</div>
<div class="a" style="right:56.1px;top:536.6px;font-size:10px;line-height:10px;color:#d6d6d6;font-weight:normal;letter-spacing:0px;-webkit-text-stroke:0.15px #d6d6d6">14,878</div>
<div class="a" style="left:692.0px;top:557.6px;font-size:10px;line-height:10px;color:#d6d6d6;font-weight:normal;letter-spacing:0px">3.</div>
<div class="a" style="left:738.3px;top:557.6px;font-size:10px;line-height:10px;color:#d6d6d6;font-weight:normal;letter-spacing:-0.05px;-webkit-text-stroke:0.15px #d6d6d6">Seasonal Sensations: Unbeatable Deals</div>
<div class="a" style="left:993.0px;top:557.6px;font-size:10px;line-height:10px;color:#d6d6d6;font-weight:normal;letter-spacing:-0.05px;-webkit-text-stroke:0.15px #d6d6d6">Emails</div>
<div class="a" style="right:56.1px;top:557.6px;font-size:10px;line-height:10px;color:#d6d6d6;font-weight:normal;letter-spacing:0px;-webkit-text-stroke:0.15px #d6d6d6">14,548</div>
<div class="a" style="left:692.0px;top:578.6px;font-size:10px;line-height:10px;color:#d6d6d6;font-weight:normal;letter-spacing:0px">4.</div>
<div class="a" style="left:738.3px;top:578.6px;font-size:10px;line-height:10px;color:#d6d6d6;font-weight:normal;letter-spacing:-0.05px;-webkit-text-stroke:0.15px #d6d6d6">VIP Special Event</div>
<div class="a" style="left:993.0px;top:578.6px;font-size:10px;line-height:10px;color:#d6d6d6;font-weight:normal;letter-spacing:-0.05px;-webkit-text-stroke:0.15px #d6d6d6">Emails</div>
<div class="a" style="right:56.1px;top:578.6px;font-size:10px;line-height:10px;color:#d6d6d6;font-weight:normal;letter-spacing:0px;-webkit-text-stroke:0.15px #d6d6d6">14,270</div>
<div class="a" style="left:692.0px;top:599.6px;font-size:10px;line-height:10px;color:#d6d6d6;font-weight:normal;letter-spacing:0px">5.</div>
<div class="a" style="left:738.3px;top:599.6px;font-size:10px;line-height:10px;color:#d6d6d6;font-weight:normal;letter-spacing:-0.05px;-webkit-text-stroke:0.15px #d6d6d6">Eco-Friendly Innovations: A Greener Tomorrow</div>
<div class="a" style="left:993.0px;top:599.6px;font-size:10px;line-height:10px;color:#d6d6d6;font-weight:normal;letter-spacing:-0.05px;-webkit-text-stroke:0.15px #d6d6d6">Emails</div>
<div class="a" style="right:56.1px;top:599.6px;font-size:10px;line-height:10px;color:#d6d6d6;font-weight:normal;letter-spacing:0px;-webkit-text-stroke:0.15px #d6d6d6">13,939</div>
<svg class="ic" style="left:34.5px;top:702px" width="12" height="12" viewBox="0 0 12 12"><circle cx="6" cy="6" r="5.2" fill="none" stroke="#e8e8e8" stroke-width="1.4"/><rect x="5.1" y="4.8" width="1.8" height="4.6" fill="#e8e8e8"/><circle cx="6" cy="3.2" r="1" fill="#e8e8e8"/></svg>
<div class="a" style="left:49.5px;top:701.8px;font-size:12.5px;line-height:12.5px;color:#ececec;font-weight:normal;letter-spacing:-0.7px;-webkit-text-stroke:0.3px #ececec">FULLY CUSTOMIZABLE TEMPLATE</div>
<svg class="ic" style="left:1101px;top:694px" width="32" height="28" viewBox="0 0 32 28">
<defs><linearGradient id="pg" x1="0" y1="0" x2="1" y2="0"><stop offset="0" stop-color="#e8227a"/><stop offset="1" stop-color="#f7a21b"/></linearGradient></defs>
<path d="M3 16 Q8 26 16 25 Q24 25 28 17" fill="none" stroke="url(#pg)" stroke-width="3.4" stroke-linecap="round"/>
<path d="M19.5 1.5 L8.8 11.2 H15.6 L14 18 L23.2 8.3 H17 Z" fill="#f4511e"/></svg>
<div class="a" style="left:1136.0px;top:700.4px;font-size:14.5px;line-height:14.5px;color:#f2f2f2;font-weight:normal;letter-spacing:0px;-webkit-text-stroke:0.45px #f2f2f2">Power My Analytics</div>
<div class="a" style="left:141px;top:270px;width:240px;height:101.5px;border:1px solid #4a86f0"></div>
<div class="a" style="left:138.5px;top:267.5px;width:6px;height:6px;background:#3b7cf0;border:1px solid #a9c7ff"></div>
<div class="a" style="left:231.5px;top:267.5px;width:6px;height:6px;background:#3b7cf0;border:1px solid #a9c7ff"></div>
<div class="a" style="left:138.5px;top:318.0px;width:6px;height:6px;background:#3b7cf0;border:1px solid #a9c7ff"></div>
<div class="a" style="left:138.5px;top:368.3px;width:6px;height:6px;background:#3b7cf0;border:1px solid #a9c7ff"></div>
<div class="a" style="left:231.5px;top:368.3px;width:6px;height:6px;background:#3b7cf0;border:1px solid #a9c7ff"></div>
</div><!--/dash-->
<div class="a" style="left:30px;top:916px;font-size:10.5px;line-height:13px;color:#757575;letter-spacing:-0.2px">Data Last Updated: 1/3/2024 10:46:31 AM</div>
<!-- CONTEXT MENU -->
<div id="cm" style="position:absolute;left:334px;top:341px;width:168px;height:610px;background:#1c1c20;border-radius:3px;box-shadow:0 4px 8px rgba(0,0,0,.35)">
  <div class="mi" style="top:8px">Show underlying data</div>
  <div class="dv" style="top:56px"></div>
  <div class="mi" style="top:65px">Select</div>
  <svg class="ic" style="left:147px;top:80px" width="6" height="10" viewBox="0 0 6 10"><path d="M0.5 0.5 L5.5 5 L0.5 9.5 Z" fill="#e0e0e0"/></svg>
  <div class="mi" style="top:105px">Cut</div>
  <div class="mi" style="top:145px">Copy</div>
  <div class="mi" style="top:185px">Paste</div>
  <div class="mi" style="top:225px">Paste special</div>
  <svg class="ic" style="left:147px;top:240px" width="6" height="10" viewBox="0 0 6 10"><path d="M0.5 0.5 L5.5 5 L0.5 9.5 Z" fill="#e0e0e0"/></svg>
  <div class="mi" style="top:265px">Duplicate</div>
  <div class="mi" style="top:305px">Delete</div>
  <div class="dv" style="top:353px"></div>
  <div class="mi" style="top:362px">Order</div>
  <svg class="ic" style="left:147px;top:377px" width="6" height="10" viewBox="0 0 6 10"><path d="M0.5 0.5 L5.5 5 L0.5 9.5 Z" fill="#e0e0e0"/></svg>
  <div class="mi" style="top:402px">Make report-level</div>
  <div class="dv" style="top:450px"></div>
  <div class="mi" style="top:459px;color:#7a7a7e">Reset</div>
  <div class="mi" style="top:499px">Export</div>
  <div class="dv" style="top:547px"></div>
  <div class="mi" style="top:556px;color:#7a7a7e">Blend data</div>
</div>
<div class="a" style="left:337px;top:489px;width:158px;height:40px;border:3px solid #ff0000"></div>
<svg class="ic" style="left:425px;top:494px" width="20" height="26" viewBox="0 0 20 26">
<path d="M6.5 2 Q8.5 0.8 9.3 2.5 V10 Q10.5 8.6 12 9.6 Q13.6 8.8 14.6 10.4 Q16.3 9.8 17 11.6 V17 Q17 21 14.5 23.5 H8.5 Q7 22 5.5 19.5 L2.2 14 Q1.6 12.6 3 12.2 Q4.2 12 5.5 14 V3.5 Q5.6 2.6 6.5 2 Z" fill="#fff" stroke="#000" stroke-width="1.1"/>
<path d="M9.3 10 V15 M12 9.8 V15 M14.6 10.6 V15" stroke="#000" stroke-width="0.9"/>
</svg>


</body></html>
